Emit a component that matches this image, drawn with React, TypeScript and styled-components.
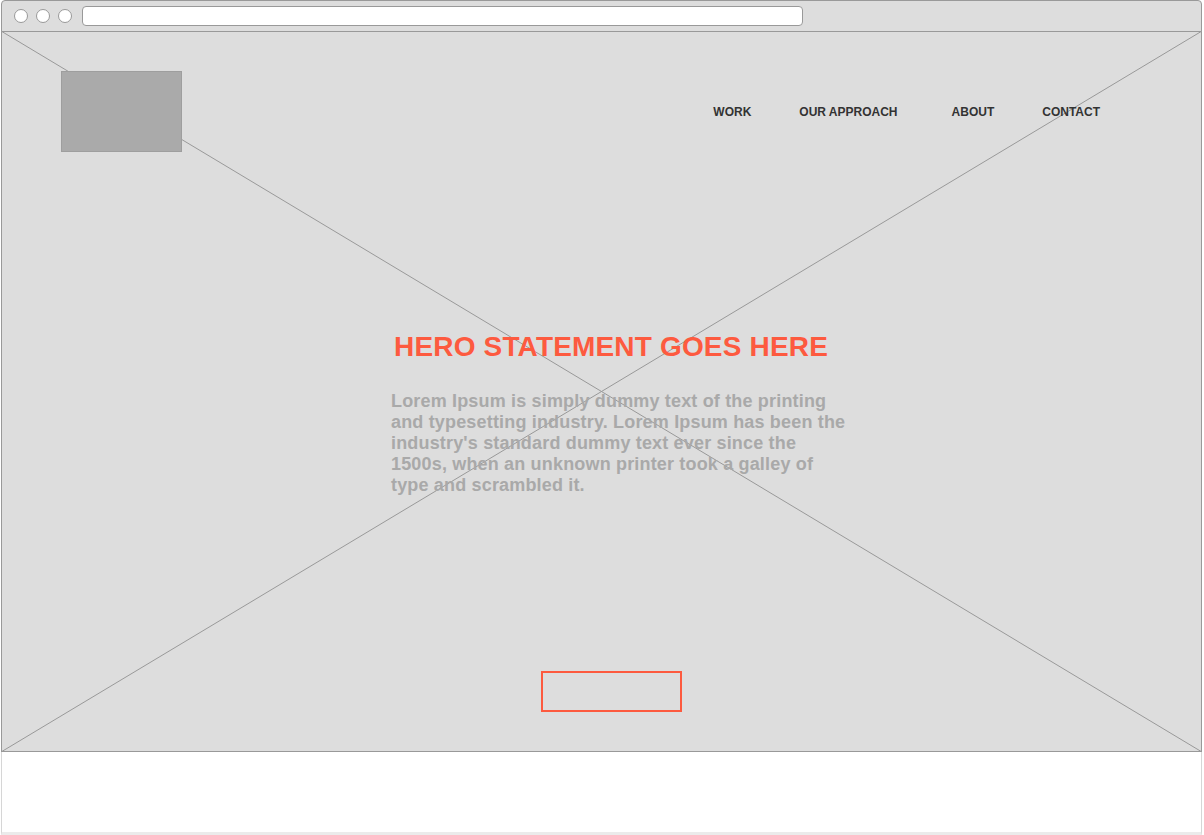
import React from "react";
import styled, { createGlobalStyle } from "styled-components";

const GlobalStyle = createGlobalStyle`
  html, body {
    margin: 0;
    padding: 0;
    background: #ffffff;
  }
  body {
    font-family: "Liberation Sans", Arial, sans-serif;
  }
  * { box-sizing: border-box; }
`;

const Frame = styled.div`
  width: 1201px;
  margin-left: 1px;
  display: flex;
  flex-direction: column;
`;

const Chrome = styled.div`
  height: 32px;
  background: #dddddd;
  border: 1px solid #999999;
  border-radius: 4px 4px 0 0;
  display: flex;
  align-items: center;
  padding: 0 0 1px 12px;
  gap: 8px;
`;

const Dot = styled.span`
  width: 14px;
  height: 14px;
  border-radius: 50%;
  background: #ffffff;
  border: 1px solid #999999;
  flex: none;
`;

const Address = styled.div`
  width: 721px;
  height: 20px;
  margin-left: 2px;
  background: #ffffff;
  border: 1px solid #999999;
  border-radius: 4px;
`;

const Hero = styled.section`
  position: relative;
  height: 720px;
  background: #dddddd;
  border-left: 1px solid #999999;
  border-right: 1px solid #999999;
  border-bottom: 1px solid #999999;
  display: flex;
  flex-direction: column;
`;

const Cross = styled.svg`
  position: absolute;
  left: -1px;
  top: -1px;
  width: calc(100% + 2px);
  height: calc(100% + 2px);
  pointer-events: none;
`;

const Header = styled.header`
  position: relative;
  display: flex;
  align-items: center;
  justify-content: space-between;
  padding: 39px 101px 0 59px;
`;

const Logo = styled.div`
  width: 121px;
  height: 81px;
  background: #aaaaaa;
  border: 1px solid #9e9e9e;
`;

const Nav = styled.nav`
  display: flex;
  align-items: center;
  gap: 47px;
`;

const NavLink = styled.a<{ $extra?: number }>`
  font-family: "Liberation Sans", Arial, sans-serif;
  font-weight: 700;
  font-size: 12px;
  color: #333333;
  text-decoration: none;
  margin-left: ${(p) => p.$extra ?? 0}px;
  cursor: pointer;
`;

const Content = styled.div`
  position: relative;
  margin: 179px 0 0 389px;
  width: 440px;
  display: flex;
  flex-direction: column;
`;

const Title = styled.h1`
  margin: 0;
  font-family: "Liberation Sans", Arial, sans-serif;
  font-weight: 700;
  font-size: 28px;
  line-height: 31px;
  letter-spacing: 0.17px;
  color: #fd5a3f;
  text-align: center;
  white-space: nowrap;
`;

const Body = styled.p`
  margin: 29px 0 0 0;
  width: 459px;
  font-family: "Liberation Sans", Arial, sans-serif;
  font-weight: 700;
  font-size: 18px;
  line-height: 21px;
  letter-spacing: 0.17px;
  color: #a9a9a9;
`;

const Button = styled.button`
  align-self: center;
  margin-top: 175px;
  width: 141px;
  height: 41px;
  background: transparent;
  border: 2px solid #fd5a3f;
  padding: 0;
  cursor: pointer;
`;

const Footer = styled.footer`
  height: 83px;
  background: #ffffff;
  border-left: 1px solid #d6d6d6;
  border-right: 1px solid #d6d6d6;
  border-bottom: 3px solid #ebebeb;
`;

export default function App() {
  return (
    <>
      <GlobalStyle />
      <Frame>
        <Chrome>
          <Dot />
          <Dot />
          <Dot />
          <Address />
        </Chrome>
        <Hero>
          <Cross>
            <line x1="0" y1="0" x2="100%" y2="100%" stroke="#999999" strokeWidth="1" />
            <line x1="100%" y1="0" x2="0" y2="100%" stroke="#999999" strokeWidth="1" />
          </Cross>
          <Header>
            <Logo />
            <Nav>
              <NavLink>WORK</NavLink>
              <NavLink $extra={1}>OUR APPROACH</NavLink>
              <NavLink $extra={7}>ABOUT</NavLink>
              <NavLink $extra={1}>CONTACT</NavLink>
            </Nav>
          </Header>
          <Content>
            <Title>HERO STATEMENT GOES HERE</Title>
            <Body>
              Lorem Ipsum is simply dummy text of the printing and typesetting
              industry. Lorem Ipsum has been the industry's standard dummy text
              ever since the 1500s, when an unknown printer took a galley of
              type and scrambled it.
            </Body>
            <Button aria-label="Call to action" />
          </Content>
        </Hero>
        <Footer />
      </Frame>
    </>
  );
}
